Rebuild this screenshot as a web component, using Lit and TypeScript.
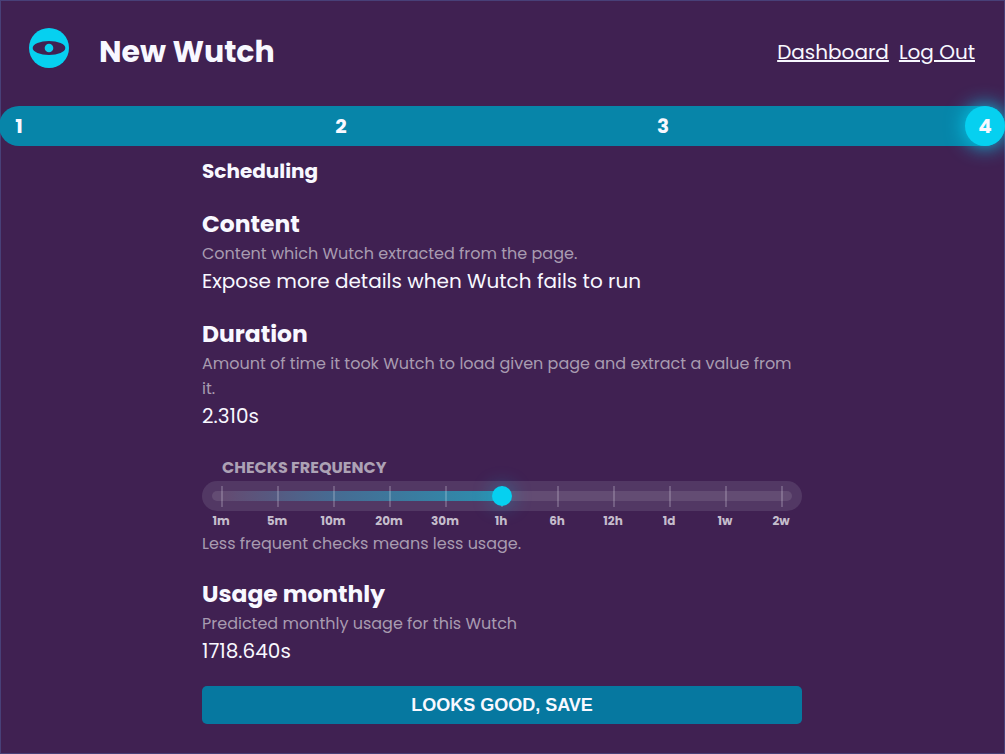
import { LitElement, html, css } from "lit";
import { customElement, property } from "lit/decorators.js";

@customElement("info-section")
class InfoSection extends LitElement {
  @property() heading = "";
  @property() note = "";
  @property() value = "";

  static styles = css`
    :host { display: block; margin-bottom: 20px; }
    .heading { margin: 0; font-size: 23.4px; line-height: 35px; font-weight: 700; }
    .note { margin: 0; font-size: 16px; line-height: 25px; color: #a89bb0; }
    .value { font-size: 20px; line-height: 30px; }
  `;

  render() {
    return html`
      <h2 class="heading"><span>${this.heading}</span></h2>
      <p class="note"><span>${this.note}</span></p>
      <div class="value"><span>${this.value}</span></div>
    `;
  }
}

@customElement("frequency-slider")
class FrequencySlider extends LitElement {
  @property({ type: Number }) selected = 5;
  private steps = ["1m", "5m", "10m", "20m", "30m", "1h", "6h", "12h", "1d", "1w", "2w"];

  static styles = css`
    :host { display: block; margin-bottom: 20px; }
    .label { padding: 4px 0 1px 20px; font-size: 16px; line-height: 25px; font-weight: 700; color: #ada2b5; }
    .rail { box-sizing: border-box; height: 30px; border-radius: 15px; background: #523864; padding: 10px; position: relative; }
    .track { height: 10px; border-radius: 5px; background: #634c73; overflow: hidden; }
    .fill { height: 10px; background: linear-gradient(90deg, rgba(6, 160, 200, 0) 5%, rgba(30, 150, 190, 0.4) 40%, rgba(30, 160, 190, 0.8)); }
    .ticks { position: absolute; left: 19px; right: 19px; top: 5px; height: 21px; display: flex; justify-content: space-between; }
    .tick { width: 2px; background: rgba(248, 248, 255, 0.2); }
    .thumb { position: absolute; top: 5px; width: 20px; height: 20px; margin-left: -10px; border-radius: 50%; background: #06d0f0; box-shadow: 0 0 20px rgba(6, 208, 240, 0.4); }
    .names { display: grid; grid-template-columns: repeat(11, 56px); margin-left: -9px; height: 20px; line-height: 20px; font-size: 12px; font-weight: 700; text-align: center; color: #c5bdcc; }
    .note { font-size: 16px; line-height: 25px; color: #a89bb0; }
  `;

  render() {
    const offset = 20 + this.selected * 56;
    return html`
      <div class="label"><span>CHECKS FREQUENCY</span></div>
      <div class="rail">
        <div class="track"><div class="fill" style="width:${offset - 10}px"></div></div>
        <div class="ticks">${this.steps.map(() => html`<i class="tick"></i>`)}</div>
        <div class="thumb" style="left:${offset}px"></div>
      </div>
      <div class="names">${this.steps.map((s) => html`<span>${s}</span>`)}</div>
      <div class="note"><span>Less frequent checks means less usage.</span></div>
    `;
  }
}

@customElement("app-root")
class AppRoot extends LitElement {
  static styles = css`
    :host { display: block; box-sizing: border-box; height: 754px; border: 1px solid #484078; background: #402152; color: #f8f8ff; font-family: Poppins, Inter, "Open Sans", sans-serif; }
    .header { height: 105px; box-sizing: border-box; display: flex; align-items: flex-start; padding: 27px 29px 0 28px; }
    .logo { width: 40px; height: 40px; flex: none; display: block; }
    .title { margin: 2px 0 0 30px; font-size: 30px; line-height: 44px; font-weight: 700; flex: 1; }
    .links { display: flex; gap: 10px; font-size: 20px; line-height: 30px; padding-top: 9px; }
    .link { color: inherit; text-decoration: underline; }
    .steps { height: 40px; margin: 0 -1px 0 -2px; border-radius: 20px; background: #0785a9; display: flex; justify-content: space-between; font-size: 20px; line-height: 40px; font-weight: 700; text-align: center; }
    .step { width: 40px; height: 40px; border-radius: 50%; }
    .step.current { background: #06d0f0; box-shadow: 0 0 20px #06d0f0; }
    .main { width: 600px; margin-left: 201px; padding-top: 10px; }
    .subtitle { margin: 0 0 20px; font-size: 20px; line-height: 30px; font-weight: 700; }
    .save { display: block; width: 100%; height: 38px; padding: 0; border: 0; border-radius: 5px; background: #0678a0; color: #f8f8ff; font: 700 18px/38px "Liberation Sans", Arial, sans-serif; }
  `;

  render() {
    return html`
      <header class="header">
        <svg class="logo" viewBox="0 0 40 40">
          <circle cx="20" cy="20" r="20" fill="#06d0f0" />
          <ellipse cx="20" cy="20" rx="16.3" ry="7" fill="#402152" />
          <circle cx="20" cy="20" r="4.3" fill="#06d0f0" />
        </svg>
        <h1 class="title"><span>New Wutch</span></h1>
        <nav class="links"><a class="link">Dashboard</a><a class="link">Log Out</a></nav>
      </header>
      <div class="steps">
        <span class="step">1</span><span class="step">2</span><span class="step">3</span><span class="step current">4</span>
      </div>
      <main class="main">
        <h3 class="subtitle"><span>Scheduling</span></h3>
        <info-section heading="Content" note="Content which Wutch extracted from the page." value="Expose more details when Wutch fails to run"></info-section>
        <info-section heading="Duration" note="Amount of time it took Wutch to load given page and extract a value from it." value="2.310s"></info-section>
        <frequency-slider selected="5"></frequency-slider>
        <info-section heading="Usage monthly" note="Predicted monthly usage for this Wutch" value="1718.640s"></info-section>
        <button class="save">LOOKS GOOD, SAVE</button>
      </main>
    `;
  }
}
